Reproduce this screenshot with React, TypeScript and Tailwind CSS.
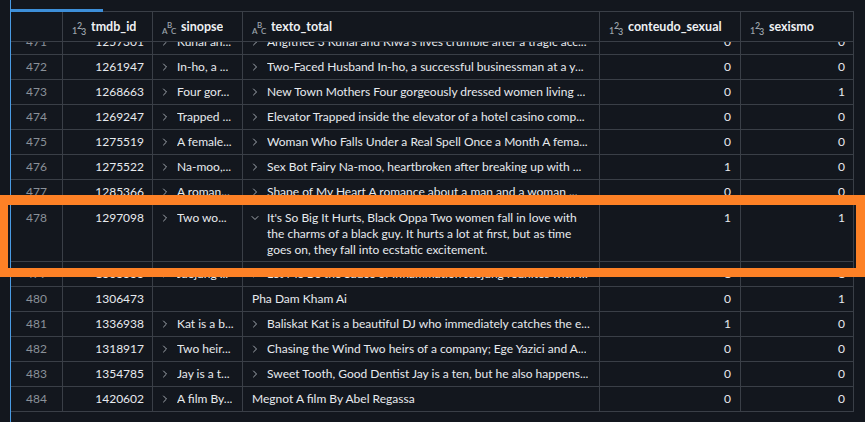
import React from 'react';
import { ChevronRight, ChevronDown } from 'lucide-react';

type Row = {
  n: number;
  id: string;
  sinopse?: string;
  texto: string;
  sexual: number;
  sexismo: number;
  chevron?: boolean;
};

const rows: Row[] = [
  { n: 471, id: '1257301', sinopse: 'Kunal an...', texto: "Angithee 3 Kunal and Kiwa's lives crumble after a tragic acc...", sexual: 0, sexismo: 0, chevron: true },
  { n: 472, id: '1261947', sinopse: 'In-ho, a ...', texto: 'Two-Faced Husband In-ho, a successful businessman at a y...', sexual: 0, sexismo: 0, chevron: true },
  { n: 473, id: '1268663', sinopse: 'Four gor...', texto: 'New Town Mothers Four gorgeously dressed women living ...', sexual: 0, sexismo: 1, chevron: true },
  { n: 474, id: '1269247', sinopse: 'Trapped ...', texto: 'Elevator Trapped inside the elevator of a hotel casino comp...', sexual: 0, sexismo: 0, chevron: true },
  { n: 475, id: '1275519', sinopse: 'A female...', texto: 'Woman Who Falls Under a Real Spell Once a Month A fema...', sexual: 0, sexismo: 0, chevron: true },
  { n: 476, id: '1275522', sinopse: 'Na-moo,...', texto: 'Sex Bot Fairy Na-moo, heartbroken after breaking up with ...', sexual: 1, sexismo: 0, chevron: true },
  { n: 477, id: '1285366', sinopse: 'A roman...', texto: 'Shape of My Heart A romance about a man and a woman ...', sexual: 0, sexismo: 0, chevron: true },
];

const rowsAfter: Row[] = [
  { n: 479, id: '1303333', sinopse: 'Jaejung ...', texto: 'Let Me Be the Sauce of Inflammation Jaejung reunites with his ...', sexual: 1, sexismo: 1, chevron: true },
  { n: 480, id: '1306473', texto: 'Pha Dam Kham Ai', sexual: 0, sexismo: 1 },
  { n: 481, id: '1336938', sinopse: 'Kat is a b...', texto: 'Baliskat Kat is a beautiful DJ who immediately catches the e...', sexual: 1, sexismo: 0, chevron: true },
  { n: 482, id: '1318917', sinopse: 'Two heir...', texto: 'Chasing the Wind Two heirs of a company; Ege Yazici and A...', sexual: 0, sexismo: 0, chevron: true },
  { n: 483, id: '1354785', sinopse: 'Jay is a t...', texto: 'Sweet Tooth, Good Dentist Jay is a ten, but he also happens...', sexual: 0, sexismo: 0, chevron: true },
  { n: 484, id: '1420602', sinopse: 'A film By...', texto: 'Megnot A film By Abel Regassa', sexual: 0, sexismo: 0 },
];

const cols = 'grid grid-cols-[52px_90px_90px_357px_141px_113px] w-[843px]';
const cell = 'border-r border-[#3a3f47] min-w-0';

// tipo numérico: 1²₃
const NumIcon = () => (
  <span className="relative inline-block shrink-0 w-[14px] h-[14px] text-[9px] font-semibold text-[#9ca3ab] leading-none">
    <span className="absolute left-0 top-[5px]">1</span>
    <span className="absolute left-[5px] top-0">2</span>
    <span className="absolute left-[9px] top-[6px]">3</span>
  </span>
);

// tipo texto: A^B_C
const StrIcon = () => (
  <span className="relative inline-block shrink-0 w-[14px] h-[14px] text-[8px] font-semibold text-[#9ca3ab] leading-none">
    <span className="absolute left-0 top-[6px]">A</span>
    <span className="absolute left-[5px] top-0">B</span>
    <span className="absolute left-[9px] top-[6px]">C</span>
  </span>
);

const HeaderCell = ({ label, icon }: { label: string; icon: React.ReactNode }) => (
  <div className={`${cell} flex items-center gap-[5px] pl-[9px] pt-[2px]`}>
    {icon}
    <span className="font-bold text-[12.5px] text-[#eef0f3] truncate">{label}</span>
  </div>
);

const TextCell = ({ text, chevron }: { text?: string; chevron?: boolean }) => (
  <div className={`${cell} flex items-center gap-[6px] ${chevron ? 'pl-[6px]' : 'pl-[9px]'} pr-[6px]`}>
    {chevron && <ChevronRight size={12} strokeWidth={2} className="shrink-0 text-[#a3a9b0]" />}
    {text && <span className="truncate">{text}</span>}
  </div>
);

const DataRow = ({ r }: { r: Row }) => (
  <div className={`${cols} h-[25px] border-b border-[#3a3f47]`}>
    <div className={`${cell} flex items-center justify-center text-[#8a9199]`}>{r.n}</div>
    <div className={`${cell} flex items-center justify-end pr-[8px]`}>{r.id}</div>
    <TextCell text={r.sinopse} chevron={!!r.sinopse} />
    <TextCell text={r.texto} chevron={r.chevron} />
    <div className={`${cell} flex items-center justify-end pr-[9px]`}>{r.sexual}</div>
    <div className={`${cell} flex items-center justify-end pr-[8px]`}>{r.sexismo}</div>
  </div>
);

const ExpandedRow = () => (
  <div className={`${cols} h-[57px] border-b border-[#3a3f47] leading-[16px]`}>
    <div className={`${cell} flex justify-center pt-[5px] text-[#8a9199]`}>478</div>
    <div className={`${cell} flex justify-end pt-[5px] pr-[8px]`}>1297098</div>
    <div className={`${cell} flex items-start gap-[6px] pl-[6px] pt-[5px]`}>
      <ChevronRight size={12} strokeWidth={2} className="shrink-0 mt-[2px] text-[#a3a9b0]" />
      <span className="truncate">Two wo...</span>
    </div>
    <div className={`${cell} flex items-start gap-[6px] pl-[6px] pt-[5px]`}>
      <ChevronDown size={12} strokeWidth={2} className="shrink-0 mt-[2px] text-[#a3a9b0]" />
      <span className="whitespace-nowrap">
        It's So Big It Hurts, Black Oppa Two women fall in love with
        <br />
        the charms of a black guy. It hurts a lot at first, but as time
        <br />
        goes on, they fall into ecstatic excitement.
      </span>
    </div>
    <div className={`${cell} flex justify-end pt-[5px] pr-[9px]`}>1</div>
    <div className={`${cell} flex justify-end pt-[5px] pr-[8px]`}>1</div>
  </div>
);

export default function App() {
  return (
    <div className="relative w-[865px] h-[422px] overflow-hidden bg-[#13171e] text-[#e7eaee] text-[12px] font-['Lato','Noto_Sans',sans-serif] flex">
      <div className="w-[10px] shrink-0" />
      <div className="w-px shrink-0 bg-[#4a9be3]" />

      <div className="flex flex-col pt-[11px] min-w-0">
        {/* cabeçalho */}
        <div className="relative">
          <div className="absolute left-0 top-[-2px] w-[92px] h-[3px] bg-[#3d8fd9]" />
          <div className={`${cols} h-[31px] border-t border-b border-[#3a3f47]`}>
            <div className={cell} />
            <HeaderCell label="tmdb_id" icon={<NumIcon />} />
            <HeaderCell label="sinopse" icon={<StrIcon />} />
            <HeaderCell label="texto_total" icon={<StrIcon />} />
            <HeaderCell label="conteudo_sexual" icon={<NumIcon />} />
            <HeaderCell label="sexismo" icon={<NumIcon />} />
          </div>
        </div>

        {/* linhas */}
        <div className="flex-1 overflow-hidden">
          <div className="-mt-[12px]">
            {rows.map(r => <DataRow key={r.n} r={r} />)}
            <ExpandedRow />
            {rowsAfter.map(r => <DataRow key={r.n} r={r} />)}
          </div>
        </div>
      </div>

      {/* destaque da linha selecionada */}
      <div className="absolute left-0 top-[195px] w-[865px] h-[82px] border-[#fd8126] border-t-[10px] border-b-[9px] border-l-[8px] border-r-[9px] pointer-events-none" />
    </div>
  );
}
